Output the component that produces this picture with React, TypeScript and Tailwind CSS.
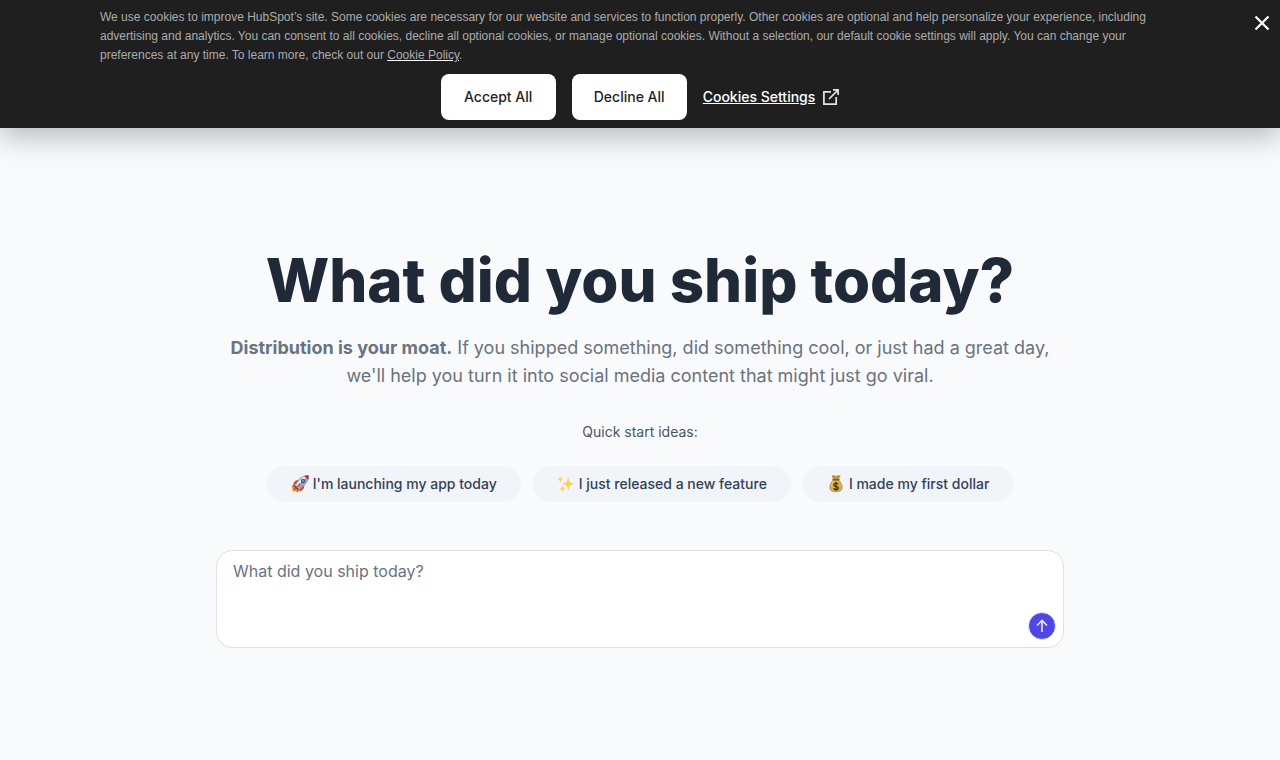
import React, { useState } from "react";

const RocketIcon = () => (
  <svg className="h-[18px] w-[18px]" viewBox="0 0 18 18" aria-hidden="true">
    <path d="M.2 11.500 4.500 9l4.500 4.500-3.500 4-.8-2L2 17.500l.5-2.900L0 16l1.300-3z" fill="#fbb02d" />
    <path d="M3 9.200.4 11.600 3.600 11.500zM9 14.500 6.200 17.400l-.7-2zM2.600 12l2.400 1.200-.6 2.300-1.900.2z" fill="#ee4b23" />
    <path d="M7.800 4.800C4.600 5 2.800 6.800 2 9.800l4.500-.2zM13.400 10c.2 3-1.600 5.300-4.600 6.600L8.200 12z" fill="#e23b30" />
    <path d="M17.600.4c.6 3.300-.6 6.500-3.200 9.100L8 14.500 3.600 10.200l4.600-6.400C10.800 1.200 14.200.1 17.600.4z" fill="#9aa9b8" />
    <path d="M16.400 1.200c-2.800 0-5.400 1-7.400 3.500L5 10.200l1.200 1.200 8.400-8.600z" fill="#eef3f7" />
    <path d="M17.600.4c.2 1.500.1 3-.4 4.400L13.100.9C14.500.4 16.100.2 17.600.4z" fill="#b92d30" />
    <circle cx="12" cy="6" r="2.200" fill="#344c69" />
    <circle cx="11.900" cy="5.900" r="1.400" fill="#45a0df" />
    <path d="m3.600 10.200 4.400 4.300-1.200.8-4-3.900z" fill="#3d4b5c" />
    <path d="m9 8 1 1-5 4.500-.8-.8z" fill="#d9382f" />
  </svg>
);

const SparklesIcon = () => (
  <svg className="h-[18px] w-[18px]" viewBox="0 0 18 18" aria-hidden="true">
    <g fill="#fdd244" stroke="#f8c667" strokeWidth=".5">
      <path d="M11.200 2.800c.6 4 1.500 5.200 5.400 6-3.900.8-4.800 2-5.400 6-.6-4-1.500-5.200-5.400-6 3.900-.8 4.800-2 5.400-6z" />
      <path d="M3.300 1.500c.3 1.800.7 2.400 2.400 2.700-1.700.3-2.100.9-2.400 2.700C3 5.100 2.600 4.500.9 4.200c1.700-.3 2.100-.9 2.400-2.700z" />
      <path d="M5.500 11c.3 1.900.8 2.500 2.500 2.800-1.700.3-2.200.9-2.500 2.800-.3-1.900-.8-2.500-2.500-2.800 1.700-.3 2.200-.9 2.500-2.800z" />
    </g>
  </svg>
);

const MoneyBagIcon = () => (
  <svg className="h-[18px] w-[18px]" viewBox="0 0 18 18" aria-hidden="true">
    <path
      d="M6.200 5.200h5.600c1.700 2 3.400 4.500 3.400 7.200 0 3.200-2.200 4.300-6.200 4.300s-6.200-1.100-6.200-4.300c0-2.700 1.700-5.200 3.400-7.200z"
      fill="#ddb04b"
      stroke="#9a7130"
      strokeWidth=".6"
    />
    <path d="M5 .9 7 .6l2 .8 2-.8 2.200.4-1.700 3.200h-5z" fill="#c9973a" stroke="#9a7130" strokeWidth=".5" />
    <path d="M6 4.700h6" stroke="#8a5a20" strokeWidth="1.400" strokeLinecap="round" />
    <path d="M4.500 10.600c.3-1.800 1.100-3 2-4" fill="none" stroke="#f5dc98" strokeWidth=".9" />
    <path
      d="M11.200 9.300c-.3-.8-1.100-1.200-2.200-1.200-1.300 0-2.200.6-2.200 1.600 0 2.300 4.600 1 4.600 3.300 0 1-1 1.700-2.300 1.700-1.400 0-2.200-.6-2.500-1.500M9 7v8.800"
      fill="none"
      stroke="#3a3524"
      strokeWidth="1.200"
    />
  </svg>
);

const quickIdeas = [
  { icon: RocketIcon, text: "I'm launching my app today" },
  { icon: SparklesIcon, text: "I just released a new feature" },
  { icon: MoneyBagIcon, text: "I made my first dollar" },
];

interface CookieBannerProps {
  onClose: () => void;
}

const CookieBanner: React.FC<CookieBannerProps> = ({ onClose }) => {
  const buttonStyle =
    "h-[46px] w-[115px] cursor-pointer rounded-lg bg-white text-sm font-medium text-[#1f1f1f] hover:bg-gray-100";

  return (
    <section
      aria-label="Cookie consent"
      className="relative bg-[#1f1f1f] px-[100px] pt-2 pb-2 text-white shadow-[0_8px_28px_rgba(0,0,0,0.28)]"
    >
      <p className="font-['Liberation_Sans',sans-serif] text-xs leading-[19px] font-light text-[#acacac]">
        We use cookies to improve HubSpot’s site. Some cookies are necessary for our website and services to function
        properly. Other cookies are optional and help personalize your experience, including advertising and analytics.
        You can consent to all cookies, decline all optional cookies, or manage optional cookies. Without a selection,
        our default cookie settings will apply. You can change your preferences at any time. To learn more, check out
        our{" "}
        <a href="#cookie-policy" className="underline decoration-white">
          Cookie Policy
        </a>
        .
      </p>

      <div className="mt-[9px] flex items-center justify-center gap-4">
        <button onClick={onClose} className={buttonStyle}>
          Accept All
        </button>
        <button onClick={onClose} className={buttonStyle}>
          Decline All
        </button>
        <button className="flex cursor-pointer items-center gap-2 text-sm font-medium">
          <span className="underline">Cookies Settings</span>
          <svg className="h-4 w-4" viewBox="0 0 16 16" fill="none" stroke="#e5e5e5" strokeWidth="1.700" aria-hidden="true">
            <path d="M8 2.800H.9v12.300h12.300V8" />
            <path d="M6 10 15 1M10 .9h5.100V6" />
          </svg>
        </button>
      </div>

      <button onClick={onClose} aria-label="Close" className="absolute top-[15px] right-[10px] cursor-pointer">
        <svg className="h-4 w-4" viewBox="0 0 16 16" fill="none" stroke="white" strokeWidth="2.200" aria-hidden="true">
          <path d="m1.500 1.500 13 13M14.500 1.500l-13 13" />
        </svg>
      </button>
    </section>
  );
};

export default function App() {
  const [showBanner, setShowBanner] = useState(true);
  const [post, setPost] = useState("");

  return (
    <div className="min-h-screen bg-[#f9fafc] font-['Inter',sans-serif]">
      {showBanner && <CookieBanner onClose={() => setShowBanner(false)} />}

      <main className="mx-auto flex max-w-4xl flex-col items-center px-6 pt-[122px] pb-12 text-center">
        <h1 className="text-6xl leading-none font-extrabold text-[#1f2937]">What did you ship today?</h1>
        <p className="mt-6 text-lg leading-7 text-[#6b7280]">
          <strong className="font-bold">Distribution is your moat.</strong> If you shipped something, did something
          cool, or just had a great day, we'll help you turn it into social media content that might just go viral.
        </p>

        <p className="mt-8 text-sm leading-5 text-[#4b5563]">Quick start ideas:</p>
        <div className="mt-6 flex flex-wrap justify-center gap-3">
          {quickIdeas.map(({ icon: Icon, text }) => (
            <button
              key={text}
              onClick={() => setPost(text)}
              className="flex h-9 cursor-pointer items-center gap-1 rounded-full bg-slate-100 px-6 text-sm font-medium text-[#334155] hover:bg-slate-200"
            >
              <Icon />
              {text}
            </button>
          ))}
        </div>

        <form onSubmit={(e) => e.preventDefault()} className="relative mt-12 w-full">
          <textarea
            aria-label="What did you ship today?"
            placeholder="What did you ship today?"
            value={post}
            onChange={(e) => setPost(e.target.value)}
            className="block h-[98px] w-full resize-none rounded-2xl border border-[#dde0e7] bg-white px-4 py-2 text-base leading-6 text-[#1f2937] outline-none placeholder:text-[#6b7280]"
          />
          {/* Submit */}
          <button
            type="submit"
            aria-label="Generate post"
            className="absolute right-2 bottom-2 flex h-7 w-7 cursor-pointer items-center justify-center rounded-full border border-gray-200 bg-[#4f46e5]"
          >
            <svg className="h-4 w-4" viewBox="0 0 16 16" fill="none" stroke="#e8e7fc" strokeWidth="1.600" aria-hidden="true">
              <path d="M8 14V2.500M3 7.500l5-5 5 5" />
            </svg>
          </button>
        </form>
      </main>
    </div>
  );
}
